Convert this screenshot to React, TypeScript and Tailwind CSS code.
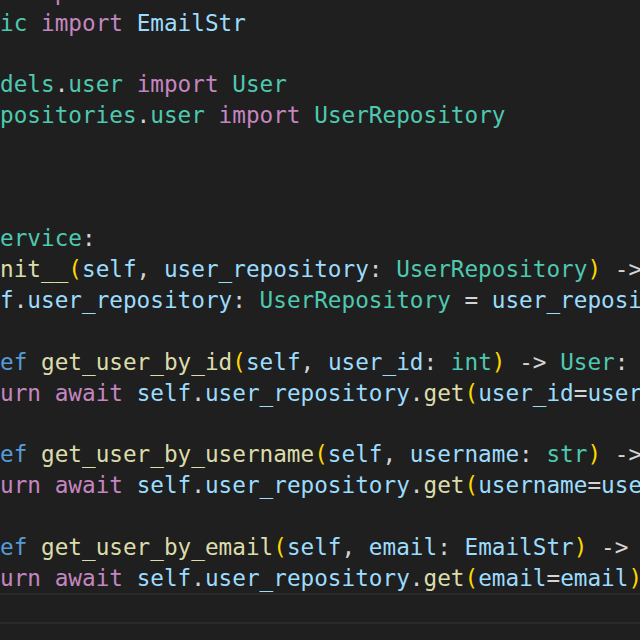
import React from "react";

type Tok = [string, string];

const K = "text-[#c586c0]"; // keyword pink
const T = "text-[#4ec9b0]"; // teal class/module
const V = "text-[#9cdcfe]"; // variable
const F = "text-[#dcdcaa]"; // function
const B = "text-[#ffd700]"; // bracket
const D = "text-[#569cd6]"; // def
const W = "text-[#d4d4d4]"; // plain

const lines: Tok[][] = [
  [["i", T], [" ", W], ["import", K], [" ", W], ["Header", T]],
  [["ic", T], [" ", W], ["import", K], [" ", W], ["EmailStr", V]],
  [],
  [["dels", T], [".", W], ["user", T], [" ", W], ["import", K], [" ", W], ["User", T]],
  [["positories", T], [".", W], ["user", T], [" ", W], ["import", K], [" ", W], ["UserRepository", T]],
  [],
  [],
  [],
  [["ervice", T], [":", W]],
  [
    ["nit__", F], ["(", B], ["self", V], [", ", W], ["user_repository", V], [": ", W],
    ["UserRepository", T], [")", B], [" -> ", W], ["None", D],
  ],
  [
    ["f", V], [".", W], ["user_repository", V], [": ", W], ["UserRepository", T], [" = ", W],
    ["user_repository", V],
  ],
  [],
  [
    ["ef", D], [" ", W], ["get_user_by_id", F], ["(", B], ["self", V], [", ", W], ["user_id", V],
    [": ", W], ["int", T], [")", B], [" -> ", W], ["User", T], [":", W],
  ],
  [
    ["urn", K], [" ", W], ["await", K], [" ", W], ["self", V], [".", W], ["user_repository", V],
    [".", W], ["get", F], ["(", B], ["user_id", V], ["=", W], ["user_id", V], [")", B],
  ],
  [],
  [
    ["ef", D], [" ", W], ["get_user_by_username", F], ["(", B], ["self", V], [", ", W],
    ["username", V], [": ", W], ["str", T], [")", B], [" -> ", W], ["User", T], [":", W],
  ],
  [
    ["urn", K], [" ", W], ["await", K], [" ", W], ["self", V], [".", W], ["user_repository", V],
    [".", W], ["get", F], ["(", B], ["username", V], ["=", W], ["username", V], [")", B],
  ],
  [],
  [
    ["ef", D], [" ", W], ["get_user_by_email", F], ["(", B], ["self", V], [", ", W], ["email", V],
    [": ", W], ["EmailStr", V], [")", B], [" -> ", W], ["User", T], [":", W],
  ],
  [
    ["urn", K], [" ", W], ["await", K], [" ", W], ["self", V], [".", W], ["user_repository", V],
    [".", W], ["get", F], ["(", B], ["email", V], ["=", W], ["email", V], [")", B],
  ],
];

export default function App() {
  return (
    <div className="w-[640px] h-[640px] overflow-hidden bg-[#1f1f1f]">
      <div
        className="-mt-[23.2px] text-[22.7px] leading-[30.83px] whitespace-pre"
        style={{ fontFamily: '"DejaVu Sans Mono", monospace' }}
      >
        {lines.map((l, i) => (
          <div key={i} className="h-[30.83px]">
            {l.map(([t, c], j) => (
              <span key={j} className={c}>
                {t}
              </span>
            ))}
          </div>
        ))}
        <div className="h-[30.83px] border-y-2 border-[#2a2a2a]"></div>
      </div>
    </div>
  );
}
